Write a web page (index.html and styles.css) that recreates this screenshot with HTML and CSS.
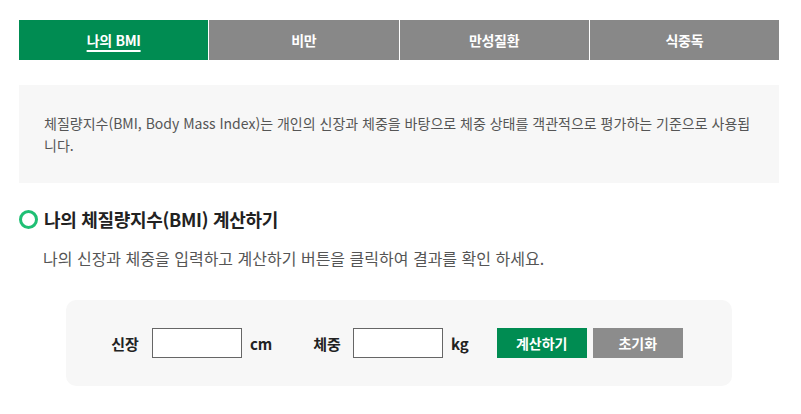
FILE: index.html
```html
<!DOCTYPE html>
<html lang="ko">
<head>
<meta charset="utf-8">
<title>나의 BMI</title>
<link rel="stylesheet" href="styles.css">
</head>
<body>
<div class="page">
  <ul class="tabs">
    <li class="tab active"><a href="#">나의 BMI</a></li>
    <li class="tab"><a href="#">비만</a></li>
    <li class="tab"><a href="#">만성질환</a></li>
    <li class="tab"><a href="#">식중독</a></li>
  </ul>
  <div class="info">체질량지수(BMI, Body Mass Index)는 개인의 신장과 체중을 바탕으로 체중 상태를 객관적으로 평가하는 기준으로 사용됩니다.</div>
  <h2 class="title">나의 체질량지수(BMI) 계산하기</h2>
  <p class="desc">나의 신장과 체중을 입력하고 계산하기 버튼을 클릭하여 결과를 확인 하세요.</p>
  <div class="calc">
    <label class="lbl">신장</label>
    <input class="field" type="text">
    <span class="unit">cm</span>
    <label class="lbl lbl-w">체중</label>
    <input class="field" type="text">
    <span class="unit">kg</span>
    <button class="btn btn-calc">계산하기</button>
    <button class="btn btn-reset">초기화</button>
  </div>
</div>
</body>
</html>
```
FILE: styles.css
```css
* { box-sizing: border-box; }
body {
  margin: 0;
  font-family: "Noto Sans CJK KR", "Noto Sans", sans-serif;
  color: #222;
  background: #fff;
}
.page {
  width: 760px;
  margin-left: 19px;
  padding-top: 20px;
}
.tabs {
  list-style: none;
  margin: 0;
  padding: 0;
  display: flex;
  height: 40px;
}
.tab {
  flex: 1;
  background: #888;
  display: flex;
  align-items: center;
  justify-content: center;
}
.tab + .tab { border-left: 1px solid #fff; }
.tab a {
  color: #fff;
  font-size: 14px;
  font-weight: 700;
  text-decoration: none;
  letter-spacing: -0.3px;
}
.tab.active { background: #008c52; }
.tab.active a {
  text-decoration: underline;
  text-underline-offset: 4px;
  text-decoration-thickness: 2px;
}
.info {
  margin-top: 25px;
  background: #f7f7f7;
  padding: 27px 22px 27px 25px;
  font-size: 14px;
  line-height: 22px;
  color: #555;
  word-break: break-all;
  letter-spacing: 0;
}
.title {
  margin: 24px 0 0;
  display: flex;
  align-items: center;
  font-size: 18px;
  line-height: 24px;
  font-weight: 700;
  color: #222;
  letter-spacing: -0.3px;
}
.title::before {
  content: "";
  flex: none;
  width: 13px;
  height: 13px;
  border: 3px solid #1fbf74;
  border-radius: 50%;
  margin-right: 6px;
}
.desc {
  margin: 16px 0 0 24px;
  font-size: 16px;
  line-height: 22px;
  color: #555;
  letter-spacing: 0;
}
.calc {
  margin: 31px 0 0 47px;
  width: 666px;
  height: 86px;
  background: #f7f7f7;
  border-radius: 10px;
  display: flex;
  align-items: center;
  justify-content: center;
  padding-right: 4px;
}
.lbl {
  font-size: 15px;
  font-weight: 700;
  color: #222;
  margin-right: 13px;
}
.lbl-w { margin-left: 41px; margin-right: 12px; }
.field {
  width: 90px;
  height: 30px;
  border: 1px solid #666;
  background: #fff;
  margin: 0;
}
.unit {
  font-size: 15px;
  font-weight: 700;
  margin-left: 8px;
  color: #222;
}
.btn {
  width: 90px;
  height: 30px;
  border: 0;
  color: #fff;
  font-family: inherit;
  font-size: 14px;
  font-weight: 700;
  padding: 0;
}
.btn-calc { background: #008c52; margin-left: 28px; }
.btn-reset { background: #8c8c8c; margin-left: 6px; }
```
